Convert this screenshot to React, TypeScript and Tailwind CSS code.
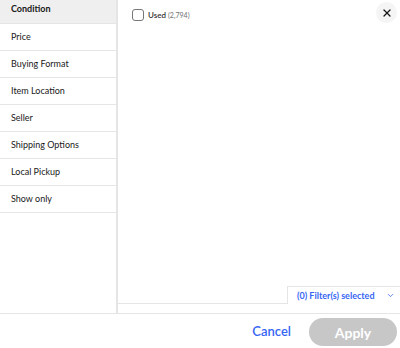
import React from 'react';
import { X, ChevronDown } from 'lucide-react';

const groups = [
  'Condition',
  'Price',
  'Buying Format',
  'Item Location',
  'Seller',
  'Shipping Options',
  'Local Pickup',
  'Show only',
];

export default function App() {
  return (
    <div
      className="w-[400px] h-[348px] bg-white flex flex-col text-[#191919] overflow-hidden"
      style={{ fontFamily: 'Lato, "Open Sans", sans-serif' }}
    >
      <div className="flex flex-1 min-h-0 border-b border-[#e5e5e5]">
        {/* left nav */}
        <div className="w-[118px] flex flex-col border-r-2 border-[#e5e5e5]">
          {groups.map((g, idx) => (
            <div
              key={g}
              className={
                idx === 0
                  ? 'h-[24px] pb-[6px] flex items-center pl-[11px] bg-[#efefef] border-b border-[#e5e5e5] text-[9px] font-bold'
                  : 'h-[27px] flex items-center pl-[11px] border-b border-[#e5e5e5] text-[9px]'
              }
            >
              {g}
            </div>
          ))}
        </div>

        {/* right content */}
        <div className="flex-1 flex flex-col">
          <div className="flex-1 flex items-start justify-between pl-[14px] pr-[2px] pt-[2px]">
            <label className="flex items-center gap-[4px] mt-[7px]">
              <span className="w-[12px] h-[12px] rounded-[3px] border border-[#767676] bg-white" />
              <span className="text-[8px] font-semibold text-[#333]">
                Used <span className="font-normal text-[#707070] text-[7px]">(2,794)</span>
              </span>
            </label>
            <button className="w-[21px] h-[21px] rounded-full bg-[#f5f5f5] flex items-center justify-center mr-[1px]">
              <X className="w-[12px] h-[12px] text-[#191919]" strokeWidth={2.5} />
            </button>
          </div>
          <div className="flex items-end h-[18px]">
            <div className="flex-1 border-b border-[#e5e5e5]" />
            <div className="w-[113px] h-[18px] border-t border-l border-[#e5e5e5] flex items-center justify-between pl-[9px] pr-[5px]">
              <span className="text-[9px] font-bold text-[#3665f3]">(0) Filter(s) selected</span>
              <ChevronDown className="w-[9px] h-[9px] text-[#3665f3]" strokeWidth={2} />
            </div>
          </div>
          <div className="h-[9px]" />
        </div>
      </div>

      {/* footer */}
      <div className="h-[34px] pt-[2px] flex items-center justify-end gap-[18px] pr-[3px]">
        <button className="text-[13px] font-semibold text-[#3665f3]">Cancel</button>
        <button className="w-[88px] h-[28px] rounded-full bg-[#c7c7c7] text-white text-[14px] font-bold">
          Apply
        </button>
      </div>
    </div>
  );
}
